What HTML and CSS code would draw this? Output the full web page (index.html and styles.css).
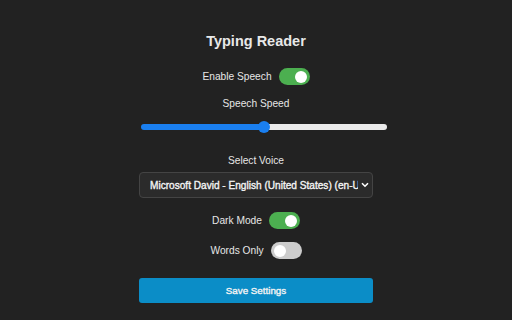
FILE: index.html
```html
<!DOCTYPE html>
<html>
<head>
<meta charset="utf-8">
<link rel="stylesheet" href="styles.css">
</head>
<body>
<div class="panel">
  <h1 class="title">Typing Reader</h1>
  <div class="row row-enable">
    <span class="label">Enable Speech</span>
    <span class="toggle on"><span class="knob"></span></span>
  </div>
  <div class="caption cap-speed">Speech Speed</div>
  <input class="range" type="range" min="0" max="100" value="50">
  <div class="caption cap-voice">Select Voice</div>
  <div class="select-wrap">
    <select class="select">
      <option>Microsoft David - English (United States) (en-US)</option>
    </select>
    <svg class="chev" width="8" height="6" viewBox="0 0 8 6"><path d="M1 1.2 L4 4.2 L7 1.2" fill="none" stroke="#fff" stroke-width="1.6"/></svg>
  </div>
  <div class="row row-dark">
    <span class="label">Dark Mode</span>
    <span class="toggle on"><span class="knob"></span></span>
  </div>
  <div class="row row-words">
    <span class="label">Words Only</span>
    <span class="toggle off"><span class="knob"></span></span>
  </div>
  <button class="save">Save Settings</button>
</div>
</body>
</html>
```
FILE: styles.css
```css
html, body {
  margin: 0;
  padding: 0;
  background: #222222;
  height: 100%;
}
body {
  font-family: "Liberation Sans", Arial, sans-serif;
  color: #ffffff;
}
.panel {
  width: 234px;
  margin: 0 auto;
  padding-top: 32px;
  display: flex;
  flex-direction: column;
  align-items: center;
}
.title {
  margin: 0;
  font-size: 14.5px;
  line-height: 18px;
  font-weight: bold;
  color: #e8e8e8;
}
.row {
  display: flex;
  align-items: center;
  gap: 7px;
  height: 17px;
}
.row-enable { margin-top: 18px; }
.row-dark { margin-top: 14px; }
.row-words { margin-top: 13px; }
.label {
  font-size: 10.2px;
  line-height: 12px;
  color: #e6e6e6;
}
.toggle {
  position: relative;
  width: 31px;
  height: 17px;
  border-radius: 9px;
  display: inline-block;
}
.toggle.on { background: #4caf50; }
.toggle.off { background: #cccccc; }
.knob {
  position: absolute;
  top: 2.5px;
  width: 12px;
  height: 12px;
  border-radius: 50%;
  background: #ffffff;
}
.toggle.on .knob { left: 16px; }
.toggle.off .knob { left: 3px; }
.caption {
  font-size: 10.2px;
  line-height: 12px;
  color: #e6e6e6;
}
.cap-speed { margin-top: 13px; }
.cap-voice { margin-top: 20px; }
.range {
  -webkit-appearance: none;
  appearance: none;
  margin: 9px 0 0 0;
  width: 246px;
  height: 16px;
  background: transparent;
  position: relative;
  left: 8px;
}
.range::-webkit-slider-runnable-track {
  height: 6px;
  border-radius: 3px;
  background: linear-gradient(to right, #1a7ff0 0, #1a7ff0 50%, #ebebeb 50%, #ebebeb 100%);
}
.range::-webkit-slider-thumb {
  -webkit-appearance: none;
  width: 12px;
  height: 12px;
  border-radius: 50%;
  background: #1a7ff0;
  margin-top: -3px;
  border: none;
}
.select-wrap {
  position: relative;
  width: 234px;
  margin-top: 5px;
}
.select {
  -webkit-appearance: none;
  appearance: none;
  width: 234px;
  height: 26px;
  background: #2b2b2b;
  border: 1px solid #444444;
  border-radius: 4px;
  color: #f4f4f4;
  font-family: "Liberation Sans", Arial, sans-serif;
  font-size: 10.1px;
  -webkit-text-stroke: 0.35px #f4f4f4;
  padding: 0 14px 0 10px;
  outline: none;
}
.chev {
  position: absolute;
  right: 4px;
  top: 10px;
}
.save {
  margin-top: 19px;
  width: 234px;
  height: 25px;
  border: none;
  border-radius: 3px;
  background: #0b8dc7;
  color: #f4f4f4;
  font-family: "Liberation Sans", Arial, sans-serif;
  font-size: 9.8px;
  -webkit-text-stroke: 0.35px #f4f4f4;
}
```
